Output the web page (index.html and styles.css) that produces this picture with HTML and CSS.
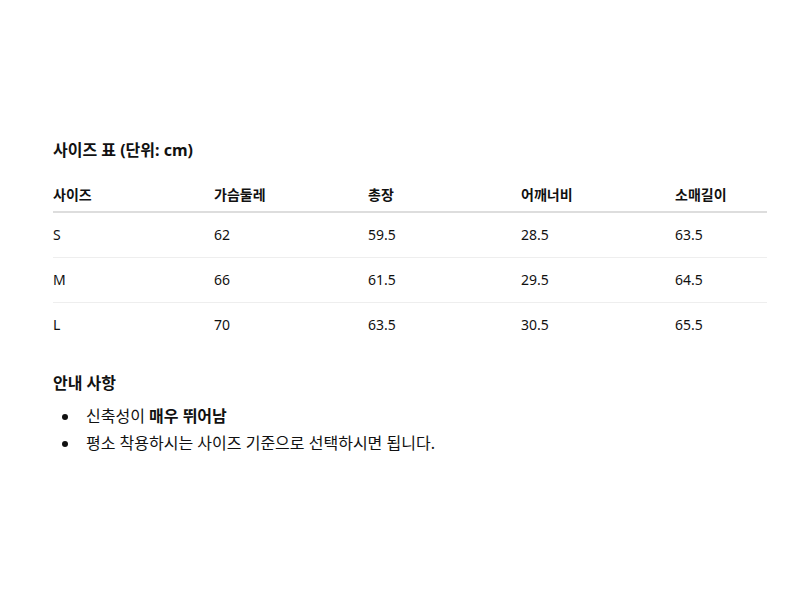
FILE: index.html
```html
<!DOCTYPE html>
<html lang="ko">
<head>
<meta charset="utf-8">
<link rel="stylesheet" href="styles.css">
</head>
<body>
<main class="page">
  <h2 class="title">사이즈 표 (단위: cm)</h2>
  <table class="size-table">
    <colgroup>
      <col class="c1"><col class="c2"><col class="c3"><col class="c4"><col class="c5">
    </colgroup>
    <thead>
      <tr><th>사이즈</th><th>가슴둘레</th><th>총장</th><th>어깨너비</th><th>소매길이</th></tr>
    </thead>
    <tbody>
      <tr><td>S</td><td>62</td><td>59.5</td><td>28.5</td><td>63.5</td></tr>
      <tr><td>M</td><td>66</td><td>61.5</td><td>29.5</td><td>64.5</td></tr>
      <tr><td>L</td><td>70</td><td>63.5</td><td>30.5</td><td>65.5</td></tr>
    </tbody>
  </table>
  <h3 class="notes-title">안내 사항</h3>
  <ul class="notes">
    <li><span>신축성이 <strong>매우 뛰어남</strong></span></li>
    <li><span>평소 착용하시는 사이즈 기준으로 선택하시면 됩니다.</span></li>
  </ul>
</main>
</body>
</html>
```

FILE: styles.css
```css
html, body {
  margin: 0;
  padding: 0;
  background: #fff;
}
body {
  font-family: "Noto Sans", "Noto Sans CJK KR", sans-serif;
  color: #111;
  font-size: 14px;
}
.page {
  padding: 138px 33px 0 53px;
}
.title {
  margin: 0;
  font-size: 16px;
  font-weight: 700;
  line-height: 24px;
}
.size-table {
  margin-top: 16px;
  width: 714px;
  border-collapse: collapse;
  table-layout: fixed;
}
.c1 { width: 161px; }
.c2 { width: 154px; }
.c3 { width: 153px; }
.c4 { width: 154px; }
.c5 { width: 92px; }
.size-table th {
  text-align: left;
  font-weight: 700;
  font-size: 14px;
  line-height: 20px;
  padding: 7px 0 6px;
  border-bottom: 2px solid #ddd;
}
.size-table td {
  padding: 12px 0;
  line-height: 20px;
  font-size: 14px;
  border-bottom: 1px solid #eee;
}
.size-table tbody tr:last-child td {
  border-bottom: none;
}
.notes-title {
  margin: 24px 0 0;
  font-size: 16px;
  font-weight: 700;
  line-height: 24px;
}
.notes {
  margin: 8px 0 0;
  padding: 0;
  list-style: none;
}
.notes li {
  display: flex;
  align-items: center;
  line-height: 27px;
  font-size: 16px;
}
.notes li::before {
  content: "";
  width: 6px;
  height: 6px;
  border-radius: 50%;
  background: #111;
  margin: 0 18px 0 9px;
  flex: none;
}
```
